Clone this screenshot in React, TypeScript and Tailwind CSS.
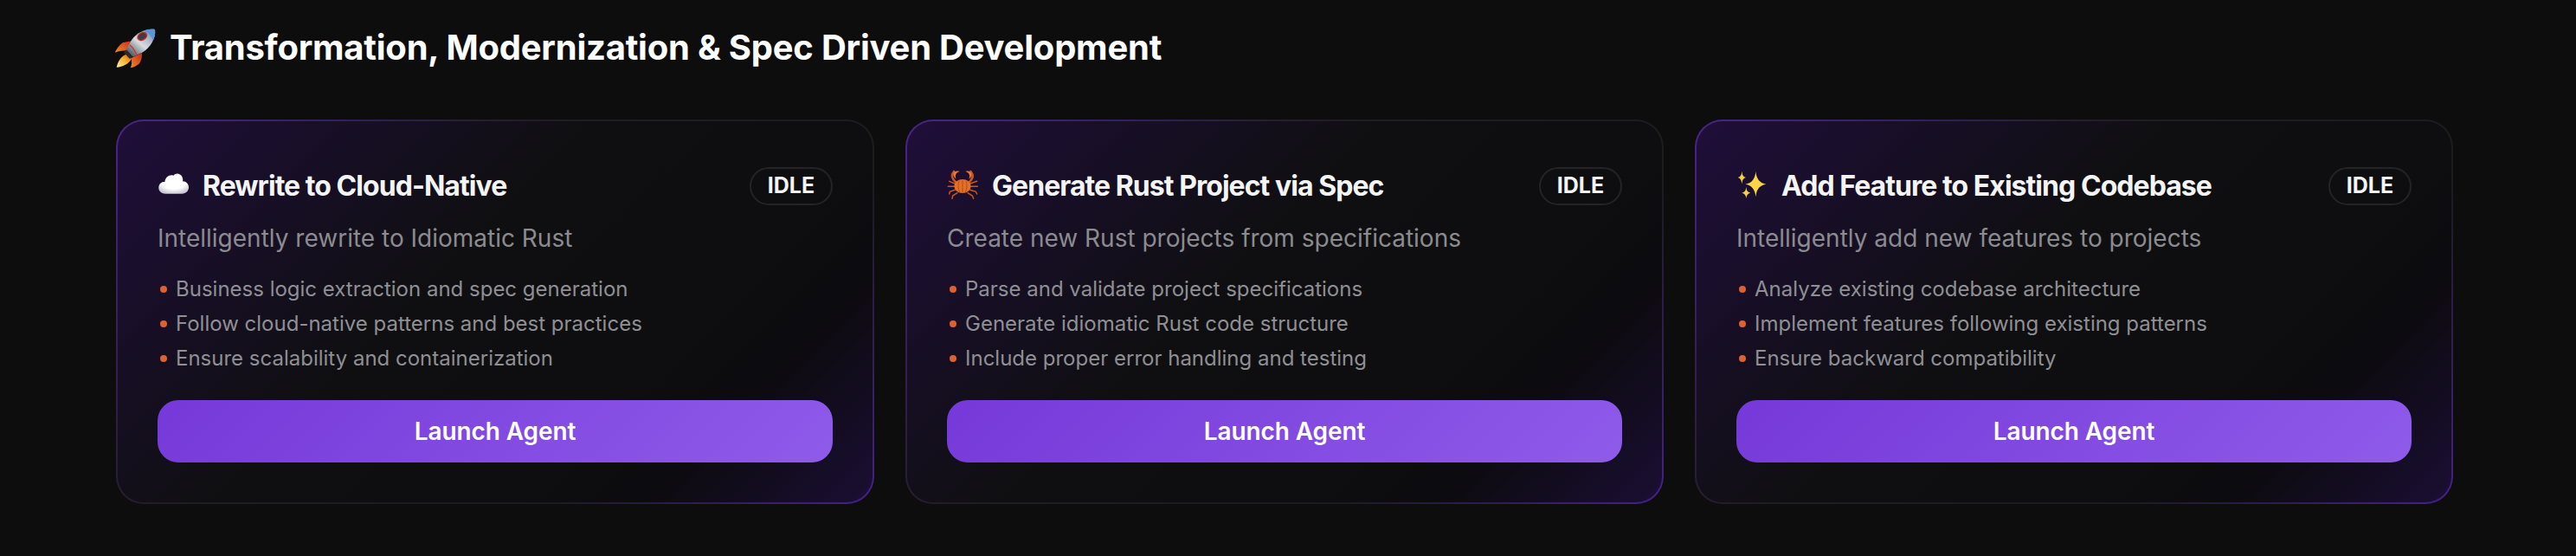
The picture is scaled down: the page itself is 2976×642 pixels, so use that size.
import React from "react";

function Rocket() {
  return (
    <svg width="62" height="60" viewBox="27 0 186 180" className="shrink-0 overflow-visible">
      <defs>
        <linearGradient id="rb" x1="0.2" y1="0.9" x2="0.9" y2="0.1">
          <stop offset="0" stopColor="#5d6670" />
          <stop offset="0.45" stopColor="#d9dde2" />
          <stop offset="0.75" stopColor="#aab6c4" />
          <stop offset="1" stopColor="#6f94c4" />
        </linearGradient>
        <linearGradient id="rf" x1="1" y1="0" x2="0" y2="1">
          <stop offset="0" stopColor="#c9281c" />
          <stop offset="1" stopColor="#f08a26" />
        </linearGradient>
        <linearGradient id="rl" x1="1" y1="0" x2="0" y2="1">
          <stop offset="0" stopColor="#e0521f" />
          <stop offset="0.5" stopColor="#f7b733" />
          <stop offset="1" stopColor="#fff2a0" />
        </linearGradient>
      </defs>
      <path d="M84 66 L50 73 C38 82 29 94 23 107 C38 101 50 99 63 101 Z" fill="url(#rf)" />
      <path d="M117 108 C118 122 115 136 107 146 C98 153 88 158 78 160 C82 148 82 136 80 126 Z" fill="url(#rf)" />
      <path d="M66 112 C46 118 34 136 29 158 C50 156 72 146 81 128 Z" fill="url(#rl)" />
      <path d="M60 97 L85 124 L74 128 L55 108 Z" fill="#2c2a2c" />
      <path d="M162 27 C130 24 100 38 82 62 L62 97 L86 122 L120 106 C146 88 166 60 162 27 Z" fill="url(#rb)" />
      <path d="M162 27 C148 24 135 27 124 32 C140 38 150 50 155 66 C161 55 165 41 162 27 Z" fill="#5f93d6" />
      <path d="M74 80 C84 88 92 98 98 114" stroke="#c9362a" strokeWidth="4" fill="none" />
      <ellipse cx="118" cy="51" rx="19" ry="14" transform="rotate(-32 118 51)" fill="#c92b24" />
      <ellipse cx="118" cy="51" rx="14" ry="10" transform="rotate(-32 118 51)" fill="#3a3d46" />
    </svg>
  );
}

function Cloud() {
  return (
    <svg width="52" height="50" viewBox="21 0 156 150" className="shrink-0">
      <defs>
        <radialGradient id="cg" cx="0.5" cy="0.35" r="0.75">
          <stop offset="0.55" stopColor="#ffffff" />
          <stop offset="1" stopColor="#b9b6c6" />
        </radialGradient>
      </defs>
      <path
        d="M48 101 C32 101 24 90 25 78 C26 66 36 58 46 60 C48 44 62 34 76 38 C84 28 100 30 106 42 C110 50 109 55 108 58 C120 58 130 68 129 80 C128 92 119 100 106 101 Z"
        fill="url(#cg)"
      />
    </svg>
  );
}

function Crab() {
  return (
    <svg width="52" height="50" viewBox="18 0 156 150" className="shrink-0">
      <g fill="none" stroke="#c9561f" strokeLinecap="round">
        <path d="M50 62 C36 50 30 38 42 24" strokeWidth="8" />
        <path d="M94 62 C108 50 112 38 100 24" strokeWidth="8" />
        <path d="M46 66 L26 58" strokeWidth="4.5" />
        <path d="M98 66 L122 58" strokeWidth="4.5" />
        <path d="M44 76 L22 76" strokeWidth="4.5" />
        <path d="M100 76 L124 76" strokeWidth="4.5" />
        <path d="M46 88 L28 94 L26 102" strokeWidth="4.5" />
        <path d="M98 88 L118 94 L122 102" strokeWidth="4.5" />
        <path d="M54 98 L38 108 L36 118" strokeWidth="4.5" />
        <path d="M90 98 L106 108 L110 118" strokeWidth="4.5" />
      </g>
      <path d="M42 26 C38 32 40 42 50 50 C44 36 50 28 62 24 C56 22 48 22 42 26 Z" fill="#e67a3a" />
      <path d="M100 26 C106 32 104 42 94 50 C100 36 94 28 82 24 C88 22 94 22 100 26 Z" fill="#e67a3a" />
      <ellipse cx="72" cy="75" rx="29" ry="24" fill="#e2702a" />
      <g stroke="#a83d14" strokeWidth="2" fill="none">
        <path d="M72 53 V98" />
        <path d="M60 56 C56 68 56 84 62 96" />
        <path d="M84 56 C88 68 88 84 82 96" />
      </g>
    </svg>
  );
}

function Sparkles() {
  const star = (cx: number, cy: number, rx: number, ry: number) =>
    `M${cx} ${cy - ry} Q${cx + rx * 0.1} ${cy - ry * 0.1} ${cx + rx} ${cy} Q${cx + rx * 0.1} ${cy + ry * 0.1} ${cx} ${cy + ry} Q${cx - rx * 0.1} ${cy + ry * 0.1} ${cx - rx} ${cy} Q${cx - rx * 0.1} ${cy - ry * 0.1} ${cx} ${cy - ry} Z`;
  return (
    <svg width="52" height="50" viewBox="18 0 156 150" className="shrink-0">
      <path d={star(85, 68, 36, 44)} fill="#f8d648" />
      <path d={star(37, 45, 14, 22)} fill="#f6cf45" />
      <path d={star(52, 98, 15, 20)} fill="#f6cf45" />
    </svg>
  );
}

const cards = [
  {
    icon: <Cloud />,
    title: "Rewrite to Cloud-Native",
    desc: "Intelligently rewrite to Idiomatic Rust",
    items: [
      "Business logic extraction and spec generation",
      "Follow cloud-native patterns and best practices",
      "Ensure scalability and containerization",
    ],
  },
  {
    icon: <Crab />,
    title: "Generate Rust Project via Spec",
    desc: "Create new Rust projects from specifications",
    items: [
      "Parse and validate project specifications",
      "Generate idiomatic Rust code structure",
      "Include proper error handling and testing",
    ],
  },
  {
    icon: <Sparkles />,
    title: "Add Feature to Existing Codebase",
    desc: "Intelligently add new features to projects",
    items: [
      "Analyze existing codebase architecture",
      "Implement features following existing patterns",
      "Ensure backward compatibility",
    ],
  },
];

export default function App() {
  return (
    <div className="min-h-[642px] bg-[#0d0d0d] pl-[134px] pr-[142px] pt-[25px] font-['Inter',sans-serif]">
      <h2 className="flex h-[60px] items-center text-[40px] font-bold tracking-[-0.23px] text-white">
        <Rocket />
        <span>Transformation, Modernization &amp; Spec Driven Development</span>
      </h2>
      <div className="mt-[53px] grid grid-cols-3 gap-9">
        {cards.map((c) => (
          <div
            key={c.title}
            className="h-[444px] rounded-[32px] bg-[linear-gradient(135deg,#4a2488_0%,#201d26_38%,#1c1b20_72%,#46228a_100%)] p-[2px]"
          >
            <div className="flex h-full flex-col rounded-[30px] bg-[linear-gradient(135deg,#1f0e3a_0%,#0f0f11_42%,#0e0e10_66%,#0c0b0f_80%,#1b0e34_100%)] px-[46px] pt-[53px]">
              <div className="flex h-[44px] items-center justify-between">
                <div className="flex items-center text-[32px] font-bold tracking-[-0.95px] text-[#f4f4f5]">
                  {c.icon}
                  <span>{c.title}</span>
                </div>
                <span className="flex h-[44px] w-[96px] items-center justify-center rounded-full border-2 border-[#232328] text-[25px] font-bold text-[#f4f4f5]">
                  IDLE
                </span>
              </div>
              <p className="mt-[16px] text-[28px] leading-[44px] text-[#8b8b90]">{c.desc}</p>
              <ul className="mt-[17px] flex flex-col">
                {c.items.map((t) => (
                  <li key={t} className="flex h-[40px] items-center text-[24px] text-[#8f8f94]">
                    <span className="ml-[3px] mr-[10px] h-[8px] w-[8px] shrink-0 rounded-full bg-[#e0602f]" />
                    {t}
                  </li>
                ))}
              </ul>
              <button className="mt-[28px] h-[72px] w-full rounded-[24px] bg-[linear-gradient(135deg,#7639d9_0%,#8f5bea_100%)] text-[28px] font-semibold tracking-[-0.1px] text-white">
                Launch Agent
              </button>
            </div>
          </div>
        ))}
      </div>
    </div>
  );
}
